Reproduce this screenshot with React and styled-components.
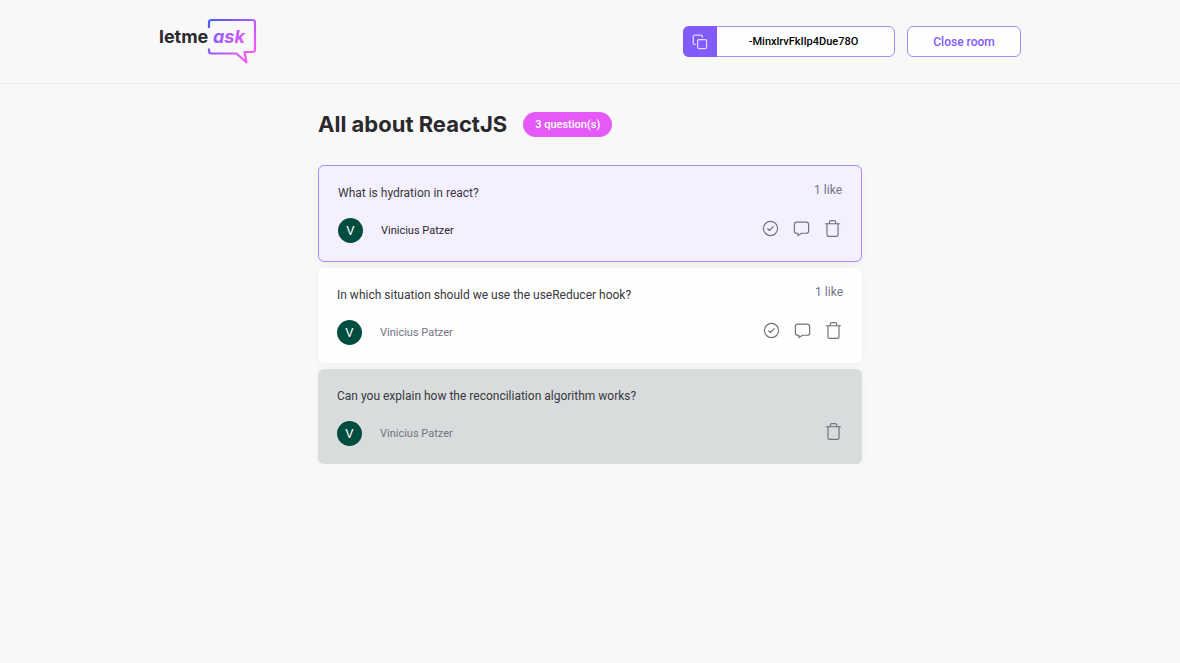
import React from "react";
import styled, { createGlobalStyle, css } from "styled-components";

const GlobalStyle = createGlobalStyle`
  * { box-sizing: border-box; margin: 0; padding: 0; }
  body {
    background: #f8f8f8;
    color: #29292e;
    font-family: Roboto, "Liberation Sans", sans-serif;
    font-size: 12px;
  }
  button { font: inherit; cursor: pointer; }
`;

const Header = styled.header`
  padding: 18px 24px;
  border-bottom: 1px solid #e7e8ea;
`;

const HeaderContent = styled.div`
  max-width: 862px;
  margin: 0 auto;
  display: flex;
  align-items: center;
  justify-content: space-between;
`;

const LogoSvg = styled.svg`
  display: block;
  width: 98px;
  height: 47px;
  font-family: Inter, sans-serif;
  font-size: 18px;
  font-weight: 700;
`;

const HeaderActions = styled.div`
  display: flex;
  gap: 12px;
`;

const RoomCode = styled.button`
  display: flex;
  width: 212px;
  height: 31px;
  background: #fefefe;
  border: 1px solid #a78bfa;
  border-radius: 6px;
  color: #000;
  font-size: 11px;
  font-weight: 500;
`;

const CopyBox = styled.span`
  display: flex;
  align-items: center;
  justify-content: center;
  align-self: stretch;
  width: 34px;
  margin: -1px 0 -1px -1px;
  border-radius: 6px 0 0 6px;
  background: #835afd;
`;

const CodeText = styled.span`
  flex: 1;
  align-self: center;
  padding-right: 4px;
  text-align: center;
`;

const CloseButton = styled.button`
  width: 114px;
  height: 31px;
  background: #fefefe;
  border: 1px solid #a78bfa;
  border-radius: 6px;
  color: #835afd;
  font-size: 12px;
  font-weight: 500;
`;

const Main = styled.main`
  max-width: 544px;
  margin: 0 auto;
`;

const RoomTitle = styled.div`
  display: flex;
  align-items: center;
  gap: 16px;
  padding: 28px 0;

  h1 {
    font-family: Inter, sans-serif;
    font-size: 22px;
    font-weight: 700;
    line-height: 25px;
  }
`;

const CountBadge = styled.span`
  padding: 0 12px;
  border-radius: 13px;
  background: #e559f9;
  color: #fff;
  font-size: 11px;
  font-weight: 500;
  line-height: 25px;
`;

const QuestionList = styled.ul`
  display: flex;
  flex-direction: column;
  gap: 6px;
  list-style: none;
`;

const Card = styled.li`
  display: flex;
  justify-content: space-between;
  padding: 15px 19px 18px;
  border-radius: 6px;
  background: #fefefe;
  box-shadow: 0 2px 9px rgba(0, 0, 0, 0.04);
  ${({ $state }) =>
    $state === "highlighted" &&
    css`
      background: #f4f0ff;
      border: 1px solid #a78bfa;
    `}
  ${({ $state }) =>
    $state === "answered" &&
    css`
      background: #d9dcdd;
    `}
`;

const QuestionBody = styled.div`
  display: flex;
  flex-direction: column;
  gap: 17px;
  padding-top: 4px;
`;

const QuestionText = styled.p`
  font-size: 12px;
  line-height: 16px;
  color: #38383d;
`;

const Author = styled.div`
  display: flex;
  align-items: center;
  gap: 18px;
  font-size: 11px;
  color: ${({ $strong }) => ($strong ? "#29292e" : "#737380")};
`;

const Avatar = styled.span`
  width: 25px;
  height: 25px;
  border-radius: 50%;
  background: #004d40;
  color: #fff;
  font-size: 13px;
  line-height: 25px;
  text-align: center;
`;

const QuestionSide = styled.div`
  display: flex;
  flex-direction: column;
  align-items: flex-end;
  justify-content: flex-end;
  gap: 20px;
  padding-bottom: 5px;
`;

const Likes = styled.span`
  font-size: 12px;
  line-height: 18px;
  color: #737380;
`;

const Actions = styled.div`
  display: flex;
  gap: 12px;
`;

const IconButton = styled.button`
  display: block;
  width: 19px;
  height: 19px;
  border: 0;
  background: transparent;
  color: #737380;
`;

const Icon = styled.svg`
  display: block;
  width: 100%;
  height: 100%;
  fill: none;
  stroke: currentColor;
  stroke-width: 1.5;
  stroke-linecap: round;
  stroke-linejoin: round;
`;

const CopySvg = styled.svg`
  width: 16px;
  height: 16px;
  fill: none;
  stroke: #e4dbff;
  stroke-width: 1.2;
  stroke-linecap: round;
  stroke-linejoin: round;
`;

function Logo() {
  return (
    <LogoSvg viewBox="0 0 98 47" role="img" aria-label="letmeask">
      <defs>
        <linearGradient id="bubble" gradientUnits="userSpaceOnUse" x1="50" y1="4" x2="88" y2="42">
          <stop offset="0" stopColor="#485bff" />
          <stop offset="1" stopColor="#ff59f8" />
        </linearGradient>
        <linearGradient id="word" gradientUnits="userSpaceOnUse" x1="54" y1="12" x2="84" y2="30">
          <stop offset="0" stopColor="#835afd" />
          <stop offset="1" stopColor="#e559f9" />
        </linearGradient>
      </defs>
      <text x="0" y="25" fill="#29292e">letme</text>
      <text x="54" y="25" fill="url(#word)" fontStyle="italic">ask</text>
      <path
        d="M50 10V4.500Q50 2 52.500 2H93.500Q96 2 96 4.500V31.500Q96 34 93.500 34H85.500L87.500 44.500L77.500 35.500H52.500Q50 35.500 50 33V30.500"
        fill="none"
        stroke="url(#bubble)"
        strokeWidth="2.2"
        strokeLinejoin="round"
      />
    </LogoSvg>
  );
}

const CheckIcon = () => (
  <Icon viewBox="0 0 24 24" aria-hidden="true">
    <circle cx="12" cy="12" r="9" />
    <path d="M8.443 12.339L10.611 14.507L15.488 9.602" />
  </Icon>
);

const AnswerIcon = () => (
  <Icon viewBox="0 0 24 24" aria-hidden="true">
    <path d="M12 18H18C19.657 18 21 16.657 21 15V7C21 5.343 19.657 4 18 4H6C4.343 4 3 5.343 3 7V15C3 16.657 4.343 18 6 18H7.500V21L12 18Z" />
  </Icon>
);

const TrashIcon = () => (
  <Icon viewBox="0 0 24 24" aria-hidden="true">
    <path d="M3 6H21" />
    <path d="M8 6V4C8 2.895 8.895 2 10 2H14C15.105 2 16 2.895 16 4V6M19 6V20C19 21.105 18.105 22 17 22H7C5.895 22 5 21.105 5 20V6" />
  </Icon>
);

const CopyIcon = () => (
  <CopySvg viewBox="0 0 16 16" aria-hidden="true">
    <rect x="5.600" y="5.600" width="9" height="9" rx="1.500" />
    <path d="M3.300 10.400H2.700Q1.200 10.400 1.200 8.900V2.700Q1.200 1.200 2.700 1.200H8.900Q10.400 1.200 10.400 2.700V3.200" />
  </CopySvg>
);

const questions = [
  { text: "What is hydration in react?", state: "highlighted", likes: "1 like" },
  { text: "In which situation should we use the useReducer hook?", state: "open", likes: "1 like" },
  { text: "Can you explain how the reconciliation algorithm works?", state: "answered" },
];

function Question({ text, state, likes }) {
  return (
    <Card $state={state}>
      <QuestionBody>
        <QuestionText>{text}</QuestionText>
        <Author $strong={state === "highlighted"}>
          <Avatar aria-hidden="true">V</Avatar>
          <span>Vinicius Patzer</span>
        </Author>
      </QuestionBody>
      <QuestionSide>
        {likes && <Likes>{likes}</Likes>}
        <Actions>
          {state !== "answered" && (
            <>
              <IconButton type="button" aria-label="Mark as answered"><CheckIcon /></IconButton>
              <IconButton type="button" aria-label="Highlight question"><AnswerIcon /></IconButton>
            </>
          )}
          <IconButton type="button" aria-label="Delete question"><TrashIcon /></IconButton>
        </Actions>
      </QuestionSide>
    </Card>
  );
}

export default function App() {
  return (
    <>
      <GlobalStyle />
      <Header>
        <HeaderContent>
          <Logo />
          <HeaderActions>
            <RoomCode type="button">
              <CopyBox><CopyIcon /></CopyBox>
              <CodeText>-MinxlrvFkIlp4Due78O</CodeText>
            </RoomCode>
            <CloseButton type="button">Close room</CloseButton>
          </HeaderActions>
        </HeaderContent>
      </Header>
      <Main>
        <RoomTitle>
          <h1>All about ReactJS</h1>
          <CountBadge>3 question(s)</CountBadge>
        </RoomTitle>
        <QuestionList>
          {questions.map((q) => (
            <Question key={q.text} {...q} />
          ))}
        </QuestionList>
      </Main>
    </>
  );
}
